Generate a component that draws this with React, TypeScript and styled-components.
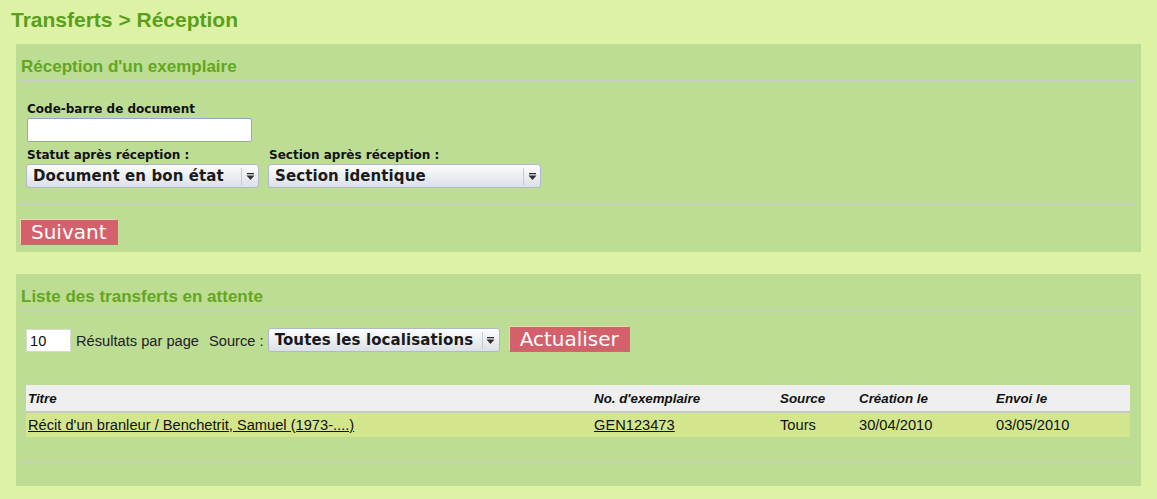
import styled, { createGlobalStyle } from "styled-components";

const GlobalStyle = createGlobalStyle`
  html, body {
    margin: 0;
    padding: 0;
    background: #def2a6;
  }
  body {
    font-family: "Liberation Sans", Arial, sans-serif;
    color: #111;
  }
`;

type Transfer = {
  title: string,
  barcode: string,
  source: string,
  created: string,
  sent: string,
}

const transfers: Transfer[] = [
  {
    title: "Récit d'un branleur / Benchetrit, Samuel (1973-....)",
    barcode: "GEN123473",
    source: "Tours",
    created: "30/04/2010",
    sent: "03/05/2010",
  },
];

const columns = [
  { label: "Titre", width: 566 },
  { label: "No. d'exemplaire", width: 186 },
  { label: "Source", width: 79 },
  { label: "Création le", width: 137 },
  { label: "Envoi le", width: 136 },
];

function SelectArrow() {
  return (
    <svg width="9" height="9" viewBox="0 0 9 9">
      <rect x="1" y="1" width="7" height="1.3" fill="#2e2e2e" />
      <polygon points="0.5,3.5 8.5,3.5 4.5,8" fill="#2e2e2e" />
    </svg>
  );
}

function FakeSelect({ value, width }: { value: string, width: number }) {
  return (
    <SelectBox $width={width}>
      <SelectValue>{value}</SelectValue>
      <ArrowCell>
        <SelectArrow />
      </ArrowCell>
    </SelectBox>
  );
}

export default function App() {
  return (
    <>
      <GlobalStyle />
      <Page>
        <PageTitle>Transferts &gt; Réception</PageTitle>

        <Panel>
          <PanelHeading>Réception d'un exemplaire</PanelHeading>
          <Separator />
          <FormBody>
            <FieldLabel>Code-barre de document</FieldLabel>
            <TextInput $width={225} defaultValue="" />
            <FieldRow>
              <Field>
                <FieldLabel>Statut après réception :</FieldLabel>
                <FakeSelect value="Document en bon état" width={233} />
              </Field>
              <Field>
                <FieldLabel>Section après réception :</FieldLabel>
                <FakeSelect value="Section identique" width={273} />
              </Field>
            </FieldRow>
          </FormBody>
          <Separator $top={15} />
          <ButtonRow>
            <Button>Suivant</Button>
          </ButtonRow>
        </Panel>

        <Panel $bottomPad={22}>
          <PanelHeading>Liste des transferts en attente</PanelHeading>
          <Separator />
          <Toolbar>
            <SmallInput defaultValue="10" />
            <ToolbarText $left={5}>Résultats par page</ToolbarText>
            <ToolbarText $left={10}>Source :</ToolbarText>
            <ToolbarSelect>
              <FakeSelect value="Toutes les localisations" width={232} />
            </ToolbarSelect>
            <Button $left={9}>Actualiser</Button>
          </Toolbar>

          <Table>
            <colgroup>
              {columns.map((c) => (
                <col key={c.label} style={{ width: c.width }} />
              ))}
            </colgroup>
            <thead>
              <tr>
                {columns.map((c) => (
                  <HeadCell key={c.label}>{c.label}</HeadCell>
                ))}
              </tr>
            </thead>
            <tbody>
              {transfers.map((t) => (
                <Row key={t.barcode}>
                  <Cell><Link href="#">{t.title}</Link></Cell>
                  <Cell><Link href="#">{t.barcode}</Link></Cell>
                  <Cell>{t.source}</Cell>
                  <Cell>{t.created}</Cell>
                  <Cell>{t.sent}</Cell>
                </Row>
              ))}
            </tbody>
          </Table>
          <Separator $top={25} $color="#c5d3b0" />
        </Panel>
      </Page>
    </>
  );
}

const Page = styled.div`
  width: 1157px;
  box-sizing: border-box;
  padding: 8px 16px 13px 11px;
`;

const PageTitle = styled.h1`
  margin: 0;
  font-size: 21px;
  line-height: 24px;
  font-weight: bold;
  color: #5a9f1c;
`;

const Panel = styled.section<{ $bottomPad?: number }>`
  margin: 12px 0 0 5px;
  padding: 13px 6px ${(p) => p.$bottomPad ?? 7}px 4px;
  background: #bddd95;
  & + & {
    margin-top: 22px;
  }
`;

const PanelHeading = styled.h2`
  margin: 0 0 0 1px;
  font-size: 17px;
  line-height: 19px;
  font-weight: bold;
  color: #63a620;
`;

const Separator = styled.div<{ $top?: number, $color?: string }>`
  margin-top: ${(p) => p.$top ?? 4}px;
  height: 2px;
  background: ${(p) => p.$color ?? "#c8cfbd"};
`;

const FormBody = styled.div`
  padding: 20px 0 0 6px;
`;

const FieldLabel = styled.label`
  display: block;
  margin-left: 1px;
  font-family: "DejaVu Sans", sans-serif;
  font-weight: bold;
  font-size: 12px;
  line-height: 14px;
  color: #111;
`;

const TextInput = styled.input<{ $width: number }>`
  display: block;
  box-sizing: border-box;
  width: ${(p) => p.$width}px;
  height: 24px;
  margin: 2px 0 0 1px;
  padding: 0 4px;
  border: 1px solid #8fa8c4;
  border-radius: 2px;
  background: #fff;
  font-family: "Liberation Sans", Arial, sans-serif;
  font-size: 14px;
  outline: none;
`;

const FieldRow = styled.div`
  display: flex;
  gap: 9px;
  margin-top: 6px;
`;

const Field = styled.div`
  display: flex;
  flex-direction: column;
  gap: 2px;
`;

const SelectBox = styled.div<{ $width: number }>`
  display: flex;
  align-items: center;
  box-sizing: border-box;
  width: ${(p) => p.$width}px;
  height: 24px;
  border: 1px solid #b0bac4;
  border-radius: 3px;
  background: linear-gradient(to bottom, #fbfcfd, #dce1e7);
`;

const SelectValue = styled.span`
  flex: 1;
  padding-left: 6px;
  font-family: "DejaVu Sans", sans-serif;
  font-weight: bold;
  font-size: 15px;
  letter-spacing: 0.1px;
  color: #1a1a1a;
  white-space: nowrap;
  overflow: hidden;
`;

const ArrowCell = styled.span`
  display: flex;
  align-items: center;
  justify-content: center;
  width: 16px;
  height: 17px;
  border-left: 1px solid #c3cbd3;
`;

const ButtonRow = styled.div`
  margin-top: 14px;
`;

const Button = styled.button<{ $left?: number }>`
  box-sizing: border-box;
  height: 26px;
  margin: 0 0 0 ${(p) => p.$left ?? 0}px;
  padding: 0 10px;
  border: 1px solid;
  border-color: #efd5b3 #9c8466 #9c8466 #efd5b3;
  background: #d4606c;
  color: #fff;
  font-family: "DejaVu Sans", sans-serif;
  font-size: 20px;
  line-height: 22px;
  cursor: pointer;
`;

const Toolbar = styled.div`
  display: flex;
  align-items: flex-end;
  margin-top: 14px;
  padding-left: 6px;
`;

const SmallInput = styled.input`
  box-sizing: border-box;
  width: 45px;
  height: 23px;
  padding: 0 3px;
  border: 1px solid #d4dccb;
  background: #fff;
  font-family: "Liberation Sans", Arial, sans-serif;
  font-size: 14.67px;
  color: #111;
  outline: none;
`;

const ToolbarText = styled.span<{ $left: number }>`
  margin-left: ${(p) => p.$left}px;
  padding-bottom: 2px;
  font-size: 14.67px;
  line-height: 17px;
  color: #222;
`;

const ToolbarSelect = styled.div`
  margin-left: 4px;
`;

const Table = styled.table`
  table-layout: fixed;
  width: 1104px;
  margin: 33px 0 0 6px;
  border-collapse: collapse;
`;

const HeadCell = styled.th`
  height: 26px;
  padding: 0 2px;
  background: #efefef;
  border-bottom: 2px solid #c8c8c8;
  text-align: left;
  font-size: 13.33px;
  font-style: italic;
  font-weight: bold;
  color: #111;
`;

const Row = styled.tr`
  background: #d3e68e;
`;

const Cell = styled.td`
  height: 24px;
  padding: 0 2px;
  font-size: 14.67px;
  color: #111;
  white-space: nowrap;
`;

const Link = styled.a`
  color: #111;
  text-decoration: underline;
`;
